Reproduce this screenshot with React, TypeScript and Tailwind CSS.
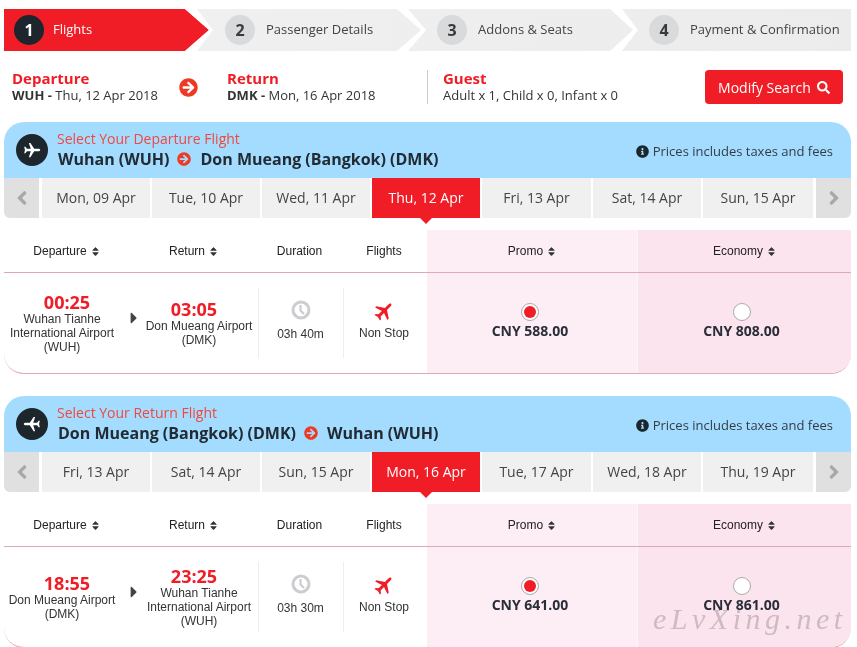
import { FaAngleLeft, FaAngleRight, FaArrowCircleRight, FaCaretRight, FaInfoCircle, FaSearch, FaSort } from "react-icons/fa"

const steps = [
    { n: 1, label: "Flights", w: "w-[211px]", pl: "pl-[10px]" },
    { n: 2, label: "Passenger Details", w: "w-[212px]", pl: "pl-[10px]" },
    { n: 3, label: "Addons & Seats", w: "w-[212px]", pl: "pl-[10px]" },
    { n: 4, label: "Payment & Confirmation", w: "w-[212px]", pl: "pl-[10px]" },
]

const dateWidths = ["w-[108px]", "w-[108px]", "w-[108px]", "w-[108px]", "w-[109px]", "w-[108px]", "w-[110px]"]

function Plane({ className }: { className: string }) {
    return (
        <svg className={className} viewBox="0 0 24 24" fill="currentColor">
            <path d="M23 12C23 10.8 21.5 10.4 20 10.4L15 10.4L9.8 2.5L7.8 2.5L10.4 10.4L5.2 10.4L3.2 7.8L1.6 7.8L2.6 12L1.6 16.2L3.2 16.2L5.2 13.6L10.4 13.6L7.8 21.5L9.8 21.5L15 13.6L20 13.6C21.5 13.6 23 13.2 23 12Z" />
        </svg>
    )
}

function Stepper() {
    return (
        <div className="relative flex h-[42px] w-[847px] bg-gradient-to-r from-[#f1f1f1] to-[#ececec] mt-[9px]">
            {steps.map((s) => (
                <div key={s.n} className={`flex items-center shrink-0 ${s.w} ${s.pl} ${s.n === 1 ? "bg-[#f01c26] [clip-path:polygon(0_0,181px_0,205px_50%,181px_100%,0_100%)]" : ""}`}>
                    <div className={`w-[30px] h-[30px] rounded-full flex items-center justify-center font-bold text-[16px] ${s.n === 1 ? "bg-[#1c262c] text-white" : "bg-[#d9dadc] text-[#3a3a3a]"}`}>{s.n}</div>
                    <span className={`text-[13px] whitespace-nowrap ${s.n === 1 ? "ml-[9px] text-white" : "ml-[11px] text-[#444444]"}`}>{s.label}</span>
                </div>
            ))}
            <svg className="absolute left-0 top-0 pointer-events-none" width="847" height="42" viewBox="0 0 847 42" fill="white">
                <path d="M181 0L193 0L209 21L193 42L181 42L205 21Z" />
                <path d="M393 0L404 0L422 21L404 42L393 42L417 21Z" />
                <path d="M606 0L618 0L634 21L618 42L606 42L629 21Z" />
            </svg>
        </div>
    )
}

function Summary() {
    return (
        <div className="flex items-center h-[34px] mt-[19px] w-[847px]">
            <div className="ml-[8px] w-[167px]">
                <p className="text-[15px] leading-[17px] font-bold text-[#f01c26]">Departure</p>
                <p className="text-[13px] leading-[17px] text-[#333333]"><b>WUH -</b> Thu, 12 Apr 2018</p>
            </div>
            <FaArrowCircleRight className="text-[#ee3a24] text-[19px] shrink-0" />
            <div className="ml-[29px] w-[200px]">
                <p className="text-[15px] leading-[17px] font-bold text-[#f01c26]">Return</p>
                <p className="text-[13px] leading-[17px] text-[#333333]"><b>DMK -</b> Mon, 16 Apr 2018</p>
            </div>
            <div className="w-px h-[34px] bg-[#cccccc]" />
            <div className="ml-[15px] w-[262px]">
                <p className="text-[15px] leading-[17px] font-bold text-[#f01c26]">Guest</p>
                <p className="text-[13px] leading-[17px] text-[#333333]">Adult x 1, Child x 0, Infant x 0</p>
            </div>
            <button className="w-[138px] h-[34px] rounded-[4px] bg-[#f01c26] text-white text-[14px] font-medium flex items-center justify-center gap-[6px]">
                Modify Search <FaSearch className="text-[13px]" />
            </button>
        </div>
    )
}

function Head({ label, sort = true, className = "" }: { label: string; sort?: boolean; className?: string }) {
    return (
        <div className={`flex items-center justify-center gap-[3px] text-[12px] text-[#222222] font-['Liberation_Sans',sans-serif] ${className}`}>
            {label}
            {sort && <FaSort className="text-[11px] text-[#333333]" />}
        </div>
    )
}

function Place({ time, lines, shift }: { time: string; lines: string[]; shift: string }) {
    return (
        <div className="flex flex-col items-center justify-center">
            <p className="text-[18px] leading-[19px] font-bold text-[#f01c26]">{time}</p>
            <div className={`flex flex-col items-center ${shift}`}>
                {lines.map((l) => (
                    <p key={l} className="text-[12px] leading-[14px] text-[#333333] whitespace-nowrap font-['Liberation_Sans',sans-serif]">{l}</p>
                ))}
            </div>
        </div>
    )
}

function Panel({ title, from, to, dates, active, dep, ret, duration, promo, economy, flip, className }: {
    title: string
    from: string
    to: string
    dates: string[]
    active: number
    dep: { time: string; lines: string[] }
    ret: { time: string; lines: string[] }
    duration: string
    promo: string
    economy: string
    flip?: boolean
    className?: string
}) {
    return (
        <section className={`w-[847px] ${className}`}>
            <div className="h-[56px] bg-[#a4dcff] rounded-t-[20px] flex items-center pl-[12px] pr-[18px]">
                <div className="w-[32px] h-[32px] rounded-full bg-[#1c262c] flex items-center justify-center shrink-0">
                    <Plane className={`w-[18px] h-[18px] text-white ${flip ? "rotate-180" : ""}`} />
                </div>
                <div className="ml-[10px] flex-1">
                    <p className="-ml-[1px] text-[14px] leading-[18px] text-[#f0483e]">{title}</p>
                    <div className="flex items-center text-[16px] leading-[22px] font-bold text-[#222b33]">
                        {from}
                        <FaArrowCircleRight className="text-[#ee3a24] text-[14px] ml-[8px] mr-[9px]" />
                        {to}
                    </div>
                </div>
                <div className="flex items-center mt-[3px]">
                    <FaInfoCircle className="text-[#1c262c] text-[13px] mr-[4px]" />
                    <span className="text-[13px] text-[#333c44]">Prices includes taxes and fees</span>
                </div>
            </div>
            <div className="flex h-[40px]">
                <div className="w-[35px] mr-[3px] bg-[#e0e0e0] rounded-bl-[6px] flex items-center justify-center text-[#a8a8a8] text-[22px]"><FaAngleLeft /></div>
                <div className="flex-1 flex gap-[2px]">
                    {dates.map((d, i) => (
                        <div key={d} className={`relative pb-[1px] flex items-center justify-center text-[14px] ${dateWidths[i]} ${i === active ? "bg-[#f01c26] text-white" : "bg-[#f0f0f0] text-[#444444]"}`}>
                            {d}
                            {i === active && <div className="absolute left-1/2 top-full -ml-[6px] w-0 h-0 border-x-[6px] border-x-transparent border-t-[6px] border-t-[#f01c26]" />}
                        </div>
                    ))}
                </div>
                <div className="w-[35px] ml-[3px] bg-[#e0e0e0] rounded-br-[6px] flex items-center justify-center text-[#a8a8a8] text-[22px]"><FaAngleRight /></div>
            </div>
            <div className="mt-[12px] border-b border-[#dfa9b4] rounded-b-[20px] overflow-hidden">
                <div className="flex h-[43px] border-b border-[#dfa9b4]">
                    <Head label="Departure" className="w-[126px]" />
                    <Head label="Return" className="w-[128px]" />
                    <Head label="Duration" sort={false} className="w-[86px] pr-[3px]" />
                    <Head label="Flights" sort={false} className="w-[83px] pr-[3px]" />
                    <Head label="Promo" className="w-[211px] pl-[1px] bg-[#fdeef5] border-r border-[#fdf5f9]" />
                    <Head label="Economy" className="flex-1 pl-[1px] bg-[#fce4ee]" />
                </div>
                <div className="flex h-[100px]">
                    <div className="w-[126px] flex items-center justify-center"><Place {...dep} shift="pr-[10px]" /></div>
                    <div className="w-[128px] flex items-center justify-center relative">
                        <FaCaretRight className="absolute -left-[5px] top-[36px] text-[#444444] text-[18px]" />
                        <Place {...ret} shift="pl-[10px]" />
                    </div>
                    <div className="w-[86px] flex items-center">
                        <div className="w-full h-[70px] pb-[3px] pr-[1px] border-x border-[#eeeeee] flex flex-col items-center justify-center text-[12px] text-[#333333] font-['Liberation_Sans',sans-serif]">
                            <svg className="w-[20px] h-[20px] mb-[5px]" viewBox="0 0 20 20" fill="none" stroke="#cbcdd0">
                                <circle cx="10" cy="10" r="8" strokeWidth="3" />
                                <path d="M9.5 5V10.5L13 14" strokeWidth="2.2" />
                            </svg>
                            {duration}
                        </div>
                    </div>
                    <div className="w-[83px] pr-[3px] pb-[5px] flex flex-col items-center justify-center text-[12px] text-[#333333] font-['Liberation_Sans',sans-serif]">
                        <Plane className="w-[22px] h-[22px] text-[#f01c26] -rotate-45 mb-[2px]" />
                        Non Stop
                    </div>
                    <div className="w-[211px] pt-[30px] pr-[4px] bg-[#fdeef5] flex flex-col items-center border-r border-[#fdf5f9]">
                        <div className="w-[18px] h-[18px] rounded-full bg-white border border-[#aaaaaa] flex items-center justify-center">
                            <div className="w-[12px] h-[12px] rounded-full bg-[#f01c26]" />
                        </div>
                        <p className="text-[14px] leading-[20px] font-bold text-[#2a2d3a]">{promo}</p>
                    </div>
                    <div className="flex-1 pt-[30px] pr-[6px] bg-[#fce4ee] flex flex-col items-center">
                        <div className="w-[18px] h-[18px] rounded-full bg-white border border-[#aaaaaa]" />
                        <p className="text-[14px] leading-[20px] font-bold text-[#2a2d3a]">{economy}</p>
                    </div>
                </div>
            </div>
        </section>
    )
}

export default function App() {
    return (
        <div className="relative w-[857px] h-[647px] overflow-hidden bg-white pl-[4px] font-['Open_Sans',sans-serif]">
            <Stepper />
            <Summary />
            <Panel
                className="mt-[18px]"
                title="Select Your Departure Flight"
                from="Wuhan (WUH)"
                to="Don Mueang (Bangkok) (DMK)"
                dates={["Mon, 09 Apr", "Tue, 10 Apr", "Wed, 11 Apr", "Thu, 12 Apr", "Fri, 13 Apr", "Sat, 14 Apr", "Sun, 15 Apr"]}
                active={3}
                dep={{ time: "00:25", lines: ["Wuhan Tianhe", "International Airport", "(WUH)"] }}
                ret={{ time: "03:05", lines: ["Don Mueang Airport", "(DMK)"] }}
                duration="03h 40m"
                promo="CNY 588.00"
                economy="CNY 808.00"
            />
            <Panel
                className="mt-[22px]"
                title="Select Your Return Flight"
                from="Don Mueang (Bangkok) (DMK)"
                to="Wuhan (WUH)"
                dates={["Fri, 13 Apr", "Sat, 14 Apr", "Sun, 15 Apr", "Mon, 16 Apr", "Tue, 17 Apr", "Wed, 18 Apr", "Thu, 19 Apr"]}
                active={3}
                dep={{ time: "18:55", lines: ["Don Mueang Airport", "(DMK)"] }}
                ret={{ time: "23:25", lines: ["Wuhan Tianhe", "International Airport", "(WUH)"] }}
                duration="03h 30m"
                promo="CNY 641.00"
                economy="CNY 861.00"
                flip
            />
            <div className="absolute left-[653px] top-[596px] text-[30px] italic tracking-[4.5px] text-[#cfd2cf] mix-blend-multiply font-['Liberation_Serif',serif]">eLvXing.net</div>
        </div>
    )
}
